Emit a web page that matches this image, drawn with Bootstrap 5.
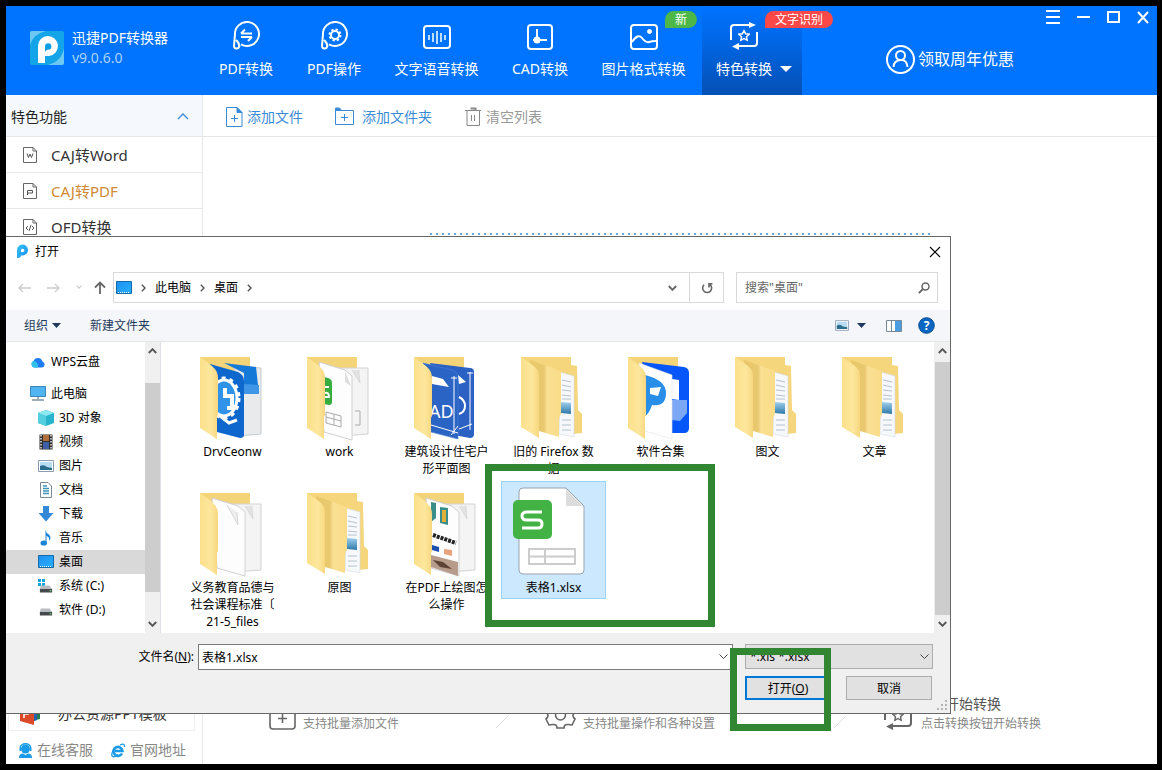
<!DOCTYPE html>
<html lang="zh-CN">
<head>
<meta charset="utf-8">
<meta name="viewport" content="width=device-width, initial-scale=1">
<title>迅捷PDF转换器</title>
<link href="https://cdn.jsdelivr.net/npm/bootstrap@5.3.0/dist/css/bootstrap.min.css" rel="stylesheet">
<style>
  body { background: #000; padding: 6px 5px 6px 6px; font-family: "Noto Sans", "Noto Sans CJK SC", sans-serif; font-size: 14px; line-height: 20px; color: #333; }
  button { font-family: inherit; }
  svg { display: block; flex: none; }
  a { text-decoration: none; color: inherit; }
  .app { min-height: calc(100vh - 12px); background: #fff; overflow: hidden; }

  /* header */
  .topbar { background: #0073ff; color: #fff; height: 89px; }
  .brand { width: 196px; padding-left: 24px; padding-bottom: 5px; gap: 8px; }
  .brand .ver { color: #a8d2ff; }
  .tab { padding: 15px 16px 0; gap: 9px; min-width: 88px; color: #fff; border: 0; background: none; white-space: nowrap; }
  .tab-wide { min-width: 117px; }
  .tab-mid { min-width: 90px; }
  .tab.active { min-width: 100px; padding: 15px 10px 0 14px; background: linear-gradient(#0073ff, #0068e8 35%, #0450b4); }
  .tab-glyph { margin-left: 13px; }
  .tip { position: absolute; top: 5px; height: 17px; border-radius: 9px 9px 9px 0; font-size: 12px; line-height: 17px; padding: 0 10px; color: #fff; }
  .tip-new { background: #4db848; right: 5px; }
  .tip-ocr { background: #fd4848; left: 63px; }
  .promo { margin-left: 84px; padding-top: 17px; gap: 3px; font-size: 16px; }
  .winctl { gap: 17px; padding: 4px 8px 0 0; }
  .winctl button, .plain { border: 0; background: none; padding: 0; color: inherit; }

  /* sidebar */
  .side { width: 197px; border-right: 1px solid #e6e8ea; }
  .side-head { height: 42px; background: #f5f9fe; border: 0; border-bottom: 1px solid #e6e8ea; padding: 2px 13px 0 5px; color: #222; }
  .side-item { height: 36px; border-bottom: 1px solid #e6e8ea; padding-left: 16px; gap: 13px; font-size: 15px; padding-top: 1px; }
  .side-item.on { color: #d08a35; }
  .promo-card { margin: 0 7px 0 2px; border: 1px solid #eee; height: 36px; gap: 17px; padding: 2px 0 0 11px; }
  .foot { height: 33px; gap: 18px; padding: 5px 0 0 12px; color: #888; }

  /* workspace */
  .tools { height: 42px; border-bottom: 1px solid #e6e6e6; padding: 2px 0 0 22px; gap: 32px; color: #3a8bd6; }
  .tools .idle { color: #999; }
  .drop { width: 500px; height: 400px; margin: 96px auto 0; background: repeating-linear-gradient(90deg, #6aaae4 0 2px, #fff 2px 6px) top / 100% 2px no-repeat; }
  .steps { display: grid; grid-template-columns: minmax(0, 276fr) minmax(0, 338fr) minmax(0, 158fr); padding: 0 116px 30px 66px; font-size: 12px; color: #888; white-space: nowrap; }
  .steps .step-title { font-size: 14px; color: #555; }
  .step { gap: 7px; }
  .step-sep { margin: 0 37px 4px auto; }

  /* file dialog */
  .dlg { position: absolute; left: 0; top: 230px; width: calc(100% - 206px); background: #fff; border: 1px solid #686868; border-left: 0; font-size: 12px; line-height: 17px; color: #000; }
  .dlg-title { height: 29px; padding: 0 9px 0 10px; gap: 6px; }
  .addr { height: 31px; border: 1px solid #d9d9d9; }
  .addr-row { padding: 6px 12px 7px 12px; }
  .path-box { margin-left: 7px; padding-left: 2px; }
  .crumb-sep { margin: 0 9px; }
  .search { width: 202px; margin-left: 12px; padding: 0 7px 0 8px; }
  .search input { border: 0; outline: 0; min-width: 0; color: #666; padding: 0; }
  .search input::placeholder { color: #666; opacity: 1; }
  .refresh { width: 34px; border: 0; border-left: 1px solid #d9d9d9; background: none; }
  .cmd { height: 32px; background: #f4f6f9; border-bottom: 1px solid #e3e5e8; color: #1e395b; padding: 0 15px 0 18px; }
  .cmd .new-dir { padding-left: 25px; }
  .tree { width: 139px; padding-top: 8px; }
  .tree a { height: 24px; padding: 0 0 1px 32px; gap: 5px; color: #000; }
  .tree a.lvl1 { padding-left: 24px; }
  .tree a.gap-b { margin-bottom: 8px; }
  .tree a.sel { background: #d9d9d9; }
  .sbar { width: 16px; background: #f0f0f0; padding: 0 0 1px; }
  .thumb-bar { background: #cdcdcd; width: 15px; }
  .files { display: grid; grid-template-columns: repeat(auto-fill, 105px); grid-auto-rows: 136px; column-gap: 2px; padding: 3px 0 0 15px; height: 291px; }
  .fitem { border: 1px solid transparent; padding: 0 7px 2px; text-align: center; align-self: start; color: #000; }
  .fitem svg { margin: 0 -4px 1px; }
  .fitem.sel { background: #cce8ff; border-color: #99d1ff; }
  .dlg-foot { background: #f0f0f0; padding: 11px 17px 13px 20px; }
  .fname-label { width: 172px; }
  .fname { height: 26px; border: 1px solid #7a7a7a; background: #fff; }
  .fname input { border: 0; outline: 0; padding: 0 0 0 3px; min-width: 0; }
  .ftype { width: 188px; height: 25px; border: 1px solid #adadad; background: #e1e1e1; padding: 0 4px; appearance: none; }
  .ftype-arrow { position: absolute; right: 4px; top: 10px; pointer-events: none; }
  .btn-row { gap: 15px; padding: 6px 1px 0 0; }
  .wbtn { width: 86px; height: 24px; background: #e1e1e1; border: 1px solid #adadad; padding: 0; }
  .wbtn.main { border: 2px solid #0078d7; }
  .grip { position: absolute; right: 2px; bottom: 2px; }

  /* tutorial highlights */
  .mark-box { position: absolute; border: 7px solid #318631; pointer-events: none; }
  .mark-file { left: 479px; top: 227px; width: 230px; height: 163px; }
  .mark-open { right: 119px; top: 411px; width: 101px; height: 83px; }
</style>
</head>
<body>

<svg width="0" height="0" class="position-absolute" aria-hidden="true">
  <defs>
    <linearGradient id="gFlap"><stop offset="0" stop-color="#fbe08b"/><stop offset=".6" stop-color="#fde79d"/><stop offset="1" stop-color="#f7d77f"/></linearGradient>
    <linearGradient id="gFlap2"><stop offset="0" stop-color="#e8c766"/><stop offset=".45" stop-color="#e9c970"/><stop offset=".55" stop-color="#fae093"/><stop offset="1" stop-color="#f9dc88"/></linearGradient>
    <linearGradient id="gDesk" x2="1" y2="1"><stop offset="0" stop-color="#1e90f0"/><stop offset="1" stop-color="#27b0ff"/></linearGradient>
    <linearGradient id="gSky" y2="1" x2="0"><stop offset="0" stop-color="#9fd0ee"/><stop offset="1" stop-color="#2d78a8"/></linearGradient>
    <linearGradient id="gP" x2="1" y2="1"><stop offset="0" stop-color="#35c5f5"/><stop offset="1" stop-color="#168df5"/></linearGradient>
    <path id="fBack" d="M16 11H66V86H40z" fill="#f3d479"/>
    <path id="fFront" d="M16 11L28 20Q34 25 34 32V69L33 71V93L16 82z" fill="url(#gFlap)"/>
    <g id="fSheets">
      <path d="M45 22L77 22V88L50 90z" fill="#f4f4f4" stroke="#d2d2d2"/><path d="M61 24L69 37L68 27V24" fill="#e3e3e3" stroke="#cfcfcf" stroke-width=".6"/>
      <path d="M28 16L54 24L61 30V94L33 86z" fill="#fdfdfd" stroke="#d0d0d0"/>
    </g>
    <symbol id="docFolder" viewBox="0 0 96 96">
      <path d="M16 11H66V19L72 20L73 64L77 68V87L68 88L40 80z" fill="#f5d67c"/>
      <path d="M55 26L69 30V91L54 88z" fill="#f6f8fb" stroke="#d5dae2" stroke-width=".6"/>
      <path d="M57 34L66 36M57 39L66 41M57 44L66 45M57 49L66 50M57 53H66M57 74H66M57 79H66M57 84H66" stroke="#a5b3c4" stroke-width=".8"/>
      <path d="M56 56L66 57V68L56 67z" fill="url(#gSky)"/>
      <path d="M25 14L56 25V68L54 72V91L34 85z" fill="url(#gFlap2)"/>
      <path d="M16 11L29 20Q34 24 34 30V92L16 81z" fill="url(#gFlap)"/>
    </symbol>
    <symbol id="desk" viewBox="0 0 16 13"><path d="M.5.5h15v12H.5z" fill="url(#gDesk)" stroke="#1669a8"/><path d="M2 11.500h12" stroke="#fff" stroke-dasharray="1 1"/></symbol>
    <symbol id="pic" viewBox="0 0 16 12"><path d="M.5.5h15v11H.5z" fill="#fff" stroke="#8c9cb0"/><path d="M2 2h12v8H2z" fill="#b9dcf5"/><path d="M2 6Q6 4 9 7L14 8V10H2z" fill="#2b6d8c"/></symbol>
    <symbol id="chU" viewBox="0 0 9 6"><path d="M.8 5L4.500 1.200L8.200 5" fill="none" stroke="currentColor" stroke-width="1.900"/></symbol>
    <symbol id="chD" viewBox="0 0 9 6"><path d="M.8 1L4.500 4.800L8.200 1" fill="none" stroke="currentColor" stroke-width="1.900"/></symbol>
    <symbol id="chR" viewBox="0 0 5 8"><path d="M.8.8L4 4L.8 7.200" fill="none" stroke="#555" stroke-width="1.400"/></symbol>
    <symbol id="bubble" viewBox="0 0 28 29"><path d="M3 14A12 12 0 1 1 9 23.400M3 13L2 25a2.700 2.700 0 0 0 5.300.6Q7.500 22 4 19" fill="none" stroke="#fff" stroke-width="2"/></symbol>
    <symbol id="star" viewBox="0 0 12 12"><path d="M6 .9L7.600 4.300L11.200 4.700L8.500 7.200L9.200 10.900L6 9L2.800 10.900L3.500 7.200L.8 4.700L4.400 4.300z" fill="none" stroke="currentColor" stroke-width="1.400"/></symbol>
    <symbol id="loop" viewBox="0 0 30 28"><path d="M2 18V6a3 3 0 0 1 3-3H21M28 10V21a3 3 0 0 1-3 3H9" fill="none" stroke="currentColor" stroke-width="2"/><path d="M20 0L27 3L20 6zM10 21L3 24.500L10 28z" fill="currentColor"/><use href="#star" x="9" y="7.500" width="12" height="12"/></symbol>
    <symbol id="sheet" viewBox="0 0 14 16"><path d="M.5.5H10L13.500 4V15.500H.5zM10 .5V4H13.500" fill="none" stroke="#666"/></symbol>
    <symbol id="disk" viewBox="0 0 16 8"><path d="M2 0H12L15 4H1z" fill="#b8bcc0"/><path d="M1 4H15V8H1z" fill="#44494d"/><path d="M12 6h2" stroke="#7dff7d"/></symbol>
  </defs>
</svg>

<div class="app d-flex flex-column position-relative">
  <header class="topbar d-flex">
    <div class="brand d-flex align-items-center">
      <svg width="34" height="34" viewBox="0 0 34 34"><rect width="34" height="34" rx="2" fill="#13a5e8"/><path d="M0 14Q3 3 16 0H2Q0 0 0 2zM34 17Q32 30 18 34H32Q34 34 34 32z" fill="#6cc8f0"/><path d="M8 32V15a10 10 0 1 1 11 10H15V32z" fill="#fff"/><path d="M15 20V15.500a3.200 3.200 0 1 1 3.200 3.200Q15 19 15 22z" fill="#0f9ee4"/></svg>
      <div><div>迅捷PDF转换器</div><div class="ver">v9.0.6.0</div></div>
    </div>
    <nav class="d-flex">
      <button class="tab d-flex flex-column align-items-center"><svg width="28" height="29"><use href="#bubble"/><path d="M9 12.500H20M13 8.500L9 12.500M20 16H9M16 20L20 16" stroke="#fff" stroke-width="2" fill="none"/></svg><span>PDF转换</span></button>
      <button class="tab d-flex flex-column align-items-center"><svg width="28" height="29"><use href="#bubble"/><circle cx="15" cy="14" r="4" fill="none" stroke="#fff" stroke-width="2"/><circle cx="15" cy="14" r="5.500" fill="none" stroke="#fff" stroke-width="2" stroke-dasharray="2.300 2"/></svg><span>PDF操作</span></button>
      <button class="tab tab-wide d-flex flex-column align-items-center"><svg width="28" height="29" fill="none" stroke="#fff" stroke-width="2"><rect x="1" y="5" width="26" height="22" rx="3"/><path d="M6 14V19M10 12V21M14 10V23M18 12V21M22 14V19" stroke-width="1.500"/></svg><span>文字语音转换</span></button>
      <button class="tab tab-mid d-flex flex-column align-items-center"><svg width="28" height="29" fill="none" stroke="#fff" stroke-width="2"><rect x="2" y="4" width="24" height="24" rx="3"/><path d="M11 8V22M7 19H21"/><circle cx="11" cy="19" r="2.500" fill="#fff"/></svg><span>CAD转换</span></button>
      <button class="tab tab-wide position-relative d-flex flex-column align-items-center"><svg width="28" height="29" fill="none" stroke="#fff" stroke-width="2"><rect x="1" y="4" width="26" height="24" rx="3"/><path d="M2 21Q8 12 12 17T19 21T26 20"/><circle cx="19.500" cy="10.500" r="2" fill="#fff" stroke-width="1"/></svg><span>图片格式转换</span><span class="tip tip-new">新</span></button>
      <button class="tab active position-relative d-flex flex-column align-items-start"><svg class="tab-glyph" width="30" height="29" viewBox="0 -1 30 29"><use href="#loop" width="30" height="28"/></svg><span class="d-flex align-items-center gap-2">特色转换<svg width="12" height="6"><path d="M0 0H12L6 6z" fill="#fff"/></svg></span><span class="tip tip-ocr">文字识别</span></button>
    </nav>
    <a href="#" class="promo d-flex align-items-center"><svg width="29" height="29" fill="none" stroke="#fff" stroke-width="2"><circle cx="14.500" cy="14.500" r="13.500"/><circle cx="14.500" cy="10.500" r="4.500"/><path d="M7.500 22Q8 15.500 14.500 15T21.500 22"/></svg>领取周年优惠</a>
    <div class="winctl d-flex align-items-start ms-auto">
      <button aria-label="菜单"><svg width="14" height="14"><path d="M0 1H14M0 7H14M0 13H14" stroke="#fff" stroke-width="2"/></svg></button>
      <button aria-label="最小化"><svg width="13" height="14"><path d="M0 7H13" stroke="#fff" stroke-width="2"/></svg></button>
      <button aria-label="最大化"><svg width="13" height="14"><path d="M1 2H12V12H1z" fill="none" stroke="#fff" stroke-width="2"/></svg></button>
      <button aria-label="关闭"><svg width="12" height="14"><path d="M1 2L11 13M11 2L1 13" stroke="#fff" stroke-width="2"/></svg></button>
    </div>
  </header>

  <div class="d-flex flex-grow-1">
    <aside class="side d-flex flex-column">
      <button class="side-head d-flex align-items-center justify-content-between">特色功能<svg width="12" height="7"><path d="M1 6L6 1L11 6" fill="none" stroke="#3a8bd6" stroke-width="1.300"/></svg></button>
      <a href="#" class="side-item d-flex align-items-center"><svg width="16" height="16"><use href="#sheet" x="1" width="14" height="16"/><path d="M5 6.500L6.500 10.500L8 7L9.500 10.500L11 6.500" fill="none" stroke="#555"/></svg>CAJ转Word</a>
      <a href="#" class="side-item on d-flex align-items-center"><svg width="16" height="16"><use href="#sheet" x="1" width="14" height="16"/><path d="M5.500 12V7.500H10.500V10H5.500" fill="none" stroke="#555"/></svg>CAJ转PDF</a>
      <a href="#" class="side-item d-flex align-items-center"><svg width="16" height="16"><use href="#sheet" x="1" width="14" height="16"/><path d="M6 7L4 9L6 11M10 7L12 9L10 11M9 6L7 12" fill="none" stroke="#555"/></svg>OFD转换</a>
      <div class="mt-auto">
        <a href="#" class="promo-card d-flex align-items-center"><svg width="21" height="22"><path d="M12 3L20 2V16L12 18z" fill="#207c4a"/><path d="M10 2L17 1V17L10 20z" fill="#2860b5"/><path d="M0 3L14 1V22L0 18z" fill="#da4a28"/><path d="M4 15V7H8V11H4" fill="none" stroke="#fff" stroke-width="1.500"/></svg>办公资源PPT模板</a>
        <div class="foot d-flex align-items-center">
          <a href="#" class="d-flex align-items-center gap-1"><svg width="15" height="15" fill="#199be8"><circle cx="7.500" cy="6" r="4.500"/><path d="M1.500 5a6 5 0 0 1 12 0v3h-1.500V5a4.500 3.500 0 0 0-9 0v3H1.500zM1 15Q1 10.500 5 10.500L7.500 12L10 10.500Q14 10.500 14 15z"/></svg>在线客服</a>
          <a href="#" class="d-flex align-items-center gap-1"><svg width="15" height="15" fill="none" stroke="#199be8"><path d="M4 8H11.500A4.500 4.500 0 1 0 11 10.500" stroke-width="2.600"/><path d="M9 2Q14-.5 13.500 4M4 4Q0 10 1 13Q3 15 7 12" stroke-width="1.300"/></svg>官网地址</a>
        </div>
      </div>
    </aside>

    <main class="flex-grow-1 d-flex flex-column">
      <div class="tools d-flex align-items-center">
        <button class="plain d-flex align-items-center gap-1"><svg width="18" height="20" fill="none" stroke="#3a8bd6"><path d="M1.500.5H12L17 5.500V19.500H1.500zM9.500 8V15M6 11.500H13"/><path d="M12 .5V5.500H17z" fill="#3a8bd6"/></svg>添加文件</button>
        <button class="plain d-flex align-items-center gap-2"><svg width="19" height="20" fill="none" stroke="#3a8bd6"><path d="M.5 3.500H18.500V17.500H.5zM9.500 7V14M6 10.500H13"/><path d="M.5 3.500V1H4.500L6.500 3.500z" fill="#3a8bd6"/></svg>添加文件夹</button>
        <button class="plain idle d-flex align-items-center gap-1"><svg width="18" height="20" fill="none" stroke="#888"><path d="M1 3.500H17M3 4V18.500H15.500V4M7.500 8V14M10.500 8V14"/><path d="M6.500 1.500H11.500V3" stroke-width="2"/></svg>清空列表</button>
      </div>
      <div class="drop"></div>
      <div class="steps mt-auto align-items-end">
        <div class="step d-flex align-items-end"><svg width="27" height="27" class="mb-1" fill="none" stroke="#666" stroke-width="1.600"><rect x="1" y="1" width="25" height="25" rx="3"/><path d="M13.500 11V20M9 15.500H18"/></svg><span>支持批量添加文件</span><svg class="step-sep" width="12" height="16"><path d="M0 14L12 2" stroke="#ddd"/></svg></div>
        <div class="step d-flex align-items-end"><svg width="31" height="27" class="mb-1" fill="none" stroke="#666" stroke-width="1.600"><circle cx="15.500" cy="12" r="5"/><path d="M12 25Q12 21 8 21.500L4 22L1 16Q5 13 1 9L5 3Q11 5 12 1H19Q20 5 26 3L30 9Q26 13 30 16L27 22L23 21.500Q19 21 19 25z"/></svg><span>支持批量操作和各种设置</span><svg class="step-sep" width="12" height="16"><path d="M0 14L12 2" stroke="#ddd"/></svg></div>
        <div class="step d-flex align-items-end"><svg width="31" height="28" class="mb-1" color="#666"><use href="#loop" width="30" height="28"/></svg><div><div class="step-title ps-4">开始转换</div><span>点击转换按钮开始转换</span></div></div>
      </div>
    </main>
  </div>

  <section class="dlg" role="dialog" aria-label="打开">
    <div class="dlg-title d-flex align-items-center">
      <svg width="13" height="15"><path d="M1 14V6a5.500 5.500 0 1 1 6 5.500H5Q5 14 1 14z" fill="url(#gP)"/><path d="M5 8V6a1.700 1.700 0 1 1 2 2z" fill="#fff"/></svg>
      <span class="flex-grow-1">打开</span>
      <button class="plain" aria-label="关闭"><svg width="12" height="12"><path d="M1 1L11 11M11 1L1 11" stroke="#000" stroke-width="1.100"/></svg></button>
    </div>
    <div class="addr-row d-flex align-items-center">
      <button class="plain" aria-label="后退"><svg width="13" height="10"><path d="M13 5H1M5 1L1 5L5 9" fill="none" stroke="#ccc" stroke-width="1.300"/></svg></button>
      <button class="plain ms-3" aria-label="前进"><svg width="13" height="10"><path d="M0 5H12M8 1L12 5L8 9" fill="none" stroke="#ccc" stroke-width="1.300"/></svg></button>
      <button class="plain ms-3" aria-label="最近"><svg width="6" height="5" color="#ccc"><use href="#chD" width="6" height="4"/></svg></button>
      <button class="plain ms-2 ps-1" aria-label="上一级"><svg width="12" height="13"><path d="M6 13V1.500M1 6.500L6 1.500L11 6.500" fill="none" stroke="#666" stroke-width="1.800"/></svg></button>
      <div class="addr path-box flex-grow-1 d-flex align-items-center">
        <svg width="16" height="13"><use href="#desk"/></svg>
        <svg width="5" height="8" class="crumb-sep"><use href="#chR"/></svg>此电脑
        <svg width="5" height="8" class="crumb-sep"><use href="#chR"/></svg>桌面
        <svg width="5" height="8" class="crumb-sep"><use href="#chR"/></svg>
        <button class="plain ms-auto me-2 pe-1" aria-label="历史"><svg width="9" height="6" color="#666"><use href="#chD"/></svg></button>
        <button class="refresh align-self-stretch d-flex align-items-center justify-content-center" aria-label="刷新"><svg width="12" height="12"><path d="M8.500 2.200A4.500 4.500 0 1 1 3 2.800M8 5.500V1.800H11.500" fill="none" stroke="#666" stroke-width="1.600"/></svg></button>
      </div>
      <div class="addr search d-flex align-items-center">
        <input class="flex-grow-1" aria-label="搜索" placeholder="搜索&quot;桌面&quot;">
        <svg width="12" height="12"><circle cx="7.500" cy="4.500" r="3.500" fill="none" stroke="#666" stroke-width="1.500"/><path d="M5 7L.8 11.200" stroke="#666" stroke-width="1.800"/></svg>
      </div>
    </div>
    <div class="cmd d-flex align-items-center">
      <button class="plain d-flex align-items-center gap-1">组织<svg width="9" height="5"><path d="M0 0H9L4.500 5z" fill="#1e395b"/></svg></button>
      <button class="plain new-dir flex-grow-1 text-start ms-1">新建文件夹</button>
      <button class="plain d-flex align-items-center gap-2" aria-label="视图"><svg width="14" height="11"><use href="#pic"/></svg><svg width="9" height="5"><path d="M0 0H9L4.500 5z" fill="#1e395b"/></svg></button>
      <button class="plain mx-3 ps-1" aria-label="预览窗格"><svg width="16" height="12"><path d="M.5.5H15.500V11.500H.5zM5.500 1V11" fill="#fff" stroke="#75879a"/><path d="M9 1H15V11H9z" fill="#4b9de0"/></svg></button>
      <button class="plain" aria-label="帮助"><svg width="17" height="17"><circle cx="8.500" cy="8.500" r="7.800" fill="#0a66c2" stroke="#084c91"/><text x="8.500" y="13" text-anchor="middle" font-size="12" font-weight="700" fill="#fff">?</text></svg></button>
    </div>
    <div class="d-flex">
      <nav class="tree">
        <a href="#" class="lvl1 gap-b d-flex align-items-center"><svg width="16" height="12"><path d="M4 11.500A3.500 3.500 0 0 1 3.500 5A4.800 4.800 0 0 1 12.500 5.500A3.100 3.100 0 0 1 12 11.500z" fill="#1f7cf2"/><path d="M4 11.500A3.500 3.500 0 0 1 3.500 5Q8 5 8 11.500z" fill="#31c1e8"/></svg>WPS云盘</a>
        <a href="#" class="lvl1 d-flex align-items-center"><svg width="16" height="15"><path d="M.5.5H15.500V10.500H.5z" fill="#50b4f0" stroke="#3b86ba"/><path d="M2 14H14M7 12H9" stroke="#7f93a3" stroke-width="1.500"/></svg>此电脑</a>
        <a href="#" class="d-flex align-items-center"><svg width="16" height="16"><path d="M0 3L8 0L16 3V13L8 16L0 13z" fill="#27b4cc"/><path d="M0 3L8 0L16 3L8 6z" fill="#8ee8f0"/><path d="M0 3L8 6V16L0 13z" fill="#54cfe0"/></svg>3D 对象</a>
        <a href="#" class="d-flex align-items-center"><svg width="16" height="16"><path d="M1.500.5H14.500V15.500H1.500z" fill="#2d2d2d"/><path d="M3 1V16M13 1V16" stroke="#e8e8e8" stroke-width="1.500" stroke-dasharray="1.500 1.500"/><path d="M5 1H11V7H5z" fill="#b06e3a"/><path d="M5 8H11V15H5z" fill="#3e5ea8"/></svg>视频</a>
        <a href="#" class="d-flex align-items-center"><svg width="16" height="12"><use href="#pic"/></svg>图片</a>
        <a href="#" class="d-flex align-items-center"><svg width="16" height="16"><path d="M2.500.5H10L13.500 4V15.500H2.500z" fill="#fff" stroke="#7c8894"/><path d="M5 4H9M5 6.500H11M5 9H11M5 11.500H11" stroke="#3f93b5" stroke-width="1.300"/></svg>文档</a>
        <a href="#" class="d-flex align-items-center"><svg width="16" height="16"><path d="M5 0H11V7H15.500L8 15.500L.5 7H5z" fill="#3389d8"/></svg>下载</a>
        <a href="#" class="d-flex align-items-center"><svg width="16" height="16"><path d="M7.500 0Q8 3 11 4.500Q14 8 11 11Q12 7 8.500 6V13H7.500z" fill="#1b86d8"/><ellipse cx="5.800" cy="13" rx="3.300" ry="2.600" fill="#1b86d8"/></svg>音乐</a>
        <a href="#" class="sel d-flex align-items-center"><svg width="16" height="13"><use href="#desk"/></svg>桌面</a>
        <a href="#" class="d-flex align-items-center"><svg width="16" height="14"><path d="M0 0H3V3H0zM4 0H7V3H4zM0 4H3V7H0zM4 4H7V7H4z" fill="#17a5e0"/><use href="#disk" y="6" x="1" width="14" height="8"/></svg>系统 (C:)</a>
        <a href="#" class="d-flex align-items-center"><svg width="16" height="12"><use href="#disk" y="4" x="1" width="14" height="8"/></svg>软件 (D:)</a>
      </nav>
      <div class="sbar d-flex flex-column align-items-center border-end me-1">
        <svg width="9" height="41" color="#555"><use href="#chU" y="6" width="9" height="6"/></svg>
        <div class="thumb-bar flex-grow-1"></div>
        <svg width="9" height="40" color="#555"><use href="#chD" y="29" width="9" height="6"/></svg>
      </div>
      <div class="files flex-grow-1">
        <a href="#" class="fitem"><svg width="96" height="96" viewBox="0 0 96 96"><use href="#fBack"/><path d="M50 20L77 22V88L55 90z" fill="#e8eaec" stroke="#c8ccd0"/><path d="M40 17L72 21L75 48L60 46V27z" fill="#1579d8"/><path d="M60 38L75 39V48H60z" fill="#3f96e6"/><path d="M26 18L54 26Q60 29 60 35V89Q60 92 56 92L33 86z" fill="#0e67cc"/><ellipse cx="40" cy="52" rx="13" ry="18" fill="#2f93ea" stroke="#fff" stroke-width="3"/><ellipse cx="40" cy="52" rx="15" ry="20" fill="none" stroke="#fff" stroke-width="3" stroke-dasharray="4 4"/><path d="M41 42V50H48V62H43" fill="none" stroke="#fff" stroke-width="4"/><path d="M36 70L45 77L53 74" stroke="#fff" stroke-width="3" fill="none"/><use href="#fFront"/></svg>DrvCeonw</a>
        <a href="#" class="fitem"><svg width="96" height="96" viewBox="0 0 96 96"><use href="#fBack"/><use href="#fSheets"/><path d="M33 31L37 32Q41 33 41 37V56Q41 59 38 59L33 58z" fill="#36ad3e"/><path d="M38 41H34M34 47Q38 46 38 51H34" stroke="#fff" fill="none" stroke-width="2"/><path d="M35 66L50 70V81L35 77zM35 71L50 75M43 68V79M64 65H69V79H64" fill="none" stroke="#aaa"/><path d="M54 25V36L60 40z" fill="#ddd"/><use href="#fFront"/></svg>work</a>
        <a href="#" class="fitem"><svg width="96" height="96" viewBox="0 0 96 96"><use href="#fBack"/><path d="M32 17L72 22Q76 22 76 26V88Q76 92 72 92L50 88z" fill="#2c61c4"/><path d="M25 17L54 24Q60 26 60 31V93L33 86z" fill="#2a64c4" stroke="#4c80d6" stroke-width=".6"/><path d="M34 30L45 33L51 41L34 38zM60 29L68 36L61 38z" fill="#fff"/><path d="M56 30V88M33 79L60 87M72 26V84M61 83L74 78M53 32H59M69 27H75M53 89L60 80" stroke="#fff" fill="none"/><text x="31" y="72" font-size="18" fill="#fff">AD</text><path d="M61 51Q67 54 67 60T61 68" fill="none" stroke="#fff" stroke-width="2"/><use href="#fFront"/></svg>建筑设计住宅户形平面图</a>
        <a href="#" class="fitem"><svg width="96" height="96"><use href="#docFolder"/></svg>旧的 Firefox 数据</a>
        <a href="#" class="fitem"><svg width="96" height="96" viewBox="0 0 96 96"><use href="#fBack"/><path d="M30 16L72 21Q77 22 77 27V82Q77 87 72 87H50z" fill="#0756fa"/><path d="M60 33L67 34V54L60 53z" fill="#fff"/><path d="M60 54L75 54V67L68 75L60 74z" fill="#7ba7f5"/><path d="M27 17L60 29V93L33 85z" fill="#fff" stroke="#e3e3e3" stroke-width=".6"/><path d="M33 29Q54 34 54 47Q54 61 40 59Q37 68 33 70z" fill="#288ee8"/><path d="M38 42L49 41L46 50L38 48z" fill="#fff"/><use href="#fFront"/></svg>软件合集</a>
        <a href="#" class="fitem"><svg width="96" height="96"><use href="#docFolder"/></svg>图文</a>
        <a href="#" class="fitem"><svg width="96" height="96"><use href="#docFolder"/></svg>文章</a>
        <a href="#" class="fitem"><svg width="96" height="96" viewBox="0 0 96 96"><use href="#fBack"/><use href="#fSheets"/><path d="M43 23L54 43L53 30" fill="#eee" stroke="#ccc" stroke-width=".7"/><use href="#fFront"/></svg>义务教育品德与社会课程标准〔<br>21-5_files</a>
        <a href="#" class="fitem"><svg width="96" height="96"><use href="#docFolder"/></svg>原图</a>
        <a href="#" class="fitem"><svg width="96" height="96" viewBox="0 0 96 96"><use href="#fBack"/><use href="#fSheets"/><path d="M33 20L38 21V36L33 40zM42 25L50 26V43L42 41z" fill="#3b8d8a"/><path d="M44 28H48V40H44z" fill="#e0b23c"/><path d="M35 53L58 61" stroke="#222" stroke-width="4" stroke-dasharray="3 1"/><path d="M34 63L41 65V70L34 68z" fill="#1d4fb0"/><path d="M46 67L54 68V74L46 72z" fill="#e8a37c"/><path d="M33 73L60 80V94L33 85z" fill="#b79c8b"/><path d="M35 78L45 80L54 87L42 85z" fill="#5d4236"/><use href="#fFront"/></svg>在PDF上绘图怎么操作</a>
        <a href="#" class="fitem sel"><svg width="96" height="96" viewBox="0 0 96 96"><path d="M18 6H61L79 24V88Q79 92 75 92H18Q14 92 14 88V10Q14 6 18 6z" fill="#fff" stroke="#98a4b0"/><path d="M61 7V24H78z" fill="#dcdcdc"/><rect x="8" y="18" width="39" height="39" rx="5" fill="#43b244"/><path d="M37 30H22Q17 30 17 34T22 38H33Q37 38 37 42T33 46H17" fill="none" stroke="#fff" stroke-width="3"/><path d="M24 67H70V82H24zM24 74.500H70M40 67V82" fill="none" stroke="#ccc" stroke-width="2"/></svg>表格1.xlsx</a>
      </div>
      <div class="sbar d-flex flex-column align-items-center">
        <svg width="9" height="20" color="#555"><use href="#chU" y="6" width="9" height="6"/></svg>
        <div class="thumb-bar flex-grow-1"></div>
        <svg width="9" height="17" color="#555"><use href="#chD" y="6" width="9" height="6"/></svg>
      </div>
    </div>
    <div class="dlg-foot">
      <div class="d-flex align-items-start">
        <label for="fn" class="fname-label text-end pt-1 pe-1">文件名(<u>N</u>):</label>
        <div class="fname flex-grow-1 d-flex align-items-center pe-1">
          <input id="fn" class="flex-grow-1" value="表格1.xlsx">
          <svg width="9" height="6"><path d="M.5.5L4.500 4.500L8.500.5" fill="none" stroke="#444"/></svg>
        </div>
        <div class="position-relative ms-2 ps-1">
          <select class="ftype d-block" aria-label="文件类型"><option>*.xls *.xlsx</option></select>
          <svg class="ftype-arrow" width="9" height="6"><path d="M.5.5L4.500 4.500L8.500.5" fill="none" stroke="#444"/></svg>
        </div>
      </div>
      <div class="btn-row d-flex justify-content-end">
        <button class="wbtn main">打开(<u>O</u>)</button>
        <button class="wbtn">取消</button>
      </div>
    </div>
    <svg class="grip" width="11" height="11" fill="#b5b5b5"><path d="M8 0h2v2H8zM4 4h2v2H4zM8 4h2v2H8zM0 8h2v2H0zM4 8h2v2H4zM8 8h2v2H8z"/></svg>
    <div class="mark-box mark-file"></div>
    <div class="mark-box mark-open"></div>
  </section>
</div>
<script src="https://cdn.jsdelivr.net/npm/bootstrap@5.3.0/dist/js/bootstrap.bundle.min.js"></script>
</body>
</html>
